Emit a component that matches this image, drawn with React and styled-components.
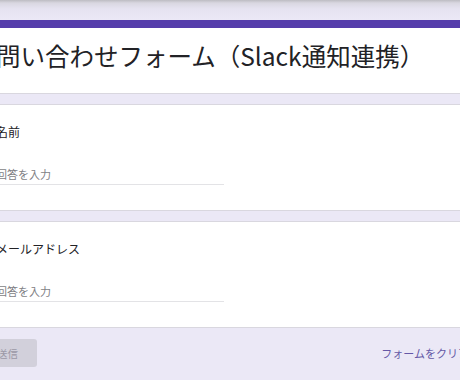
import React from "react";
import styled, { createGlobalStyle } from "styled-components";

const GlobalStyle = createGlobalStyle`
  html, body {
    margin: 0;
    padding: 0;
    height: 100%;
    overflow: hidden;
  }
  body {
    background: linear-gradient(to bottom, #bdbcc2 0px, #d9d7e1 3px, #e6e3f1 9px, #ebe8f6 20px) no-repeat, #ebe8f6;
    font-family: "Noto Sans CJK JP", "Noto Sans", sans-serif;
  }
`;

const Page = styled.div`
  padding-top: 20px;
  margin-left: -22px;
  width: 497px;
  display: flex;
  flex-direction: column;
  gap: 10px;
`;

const Card = styled.div`
  background: #ffffff;
  border-top: ${(p) => (p.$accent ? "8px solid #553dab" : "1px solid #d9d7df")};
  border-bottom: 1px solid #d9d7df;
  padding: ${(p) => (p.$accent ? "13px 18px 22px" : "19px 18px 25px")};
  display: flex;
  flex-direction: column;
`;

const Title = styled.h1`
  margin: 0;
  font-size: 24.5px;
  line-height: 30px;
  font-weight: 400;
  color: #222226;
  white-space: nowrap;
`;

const Label = styled.div`
  font-size: 12px;
  line-height: 16px;
  color: #222226;
`;

const Input = styled.div`
  margin-top: 27px;
  width: 228px;
  font-size: 11px;
  line-height: 14px;
  padding-bottom: 3px;
  color: #7f7f85;
  border-bottom: 1px solid #e3e3e6;
`;

const Footer = styled.div`
  margin-top: 1px;
  display: flex;
  align-items: center;
  justify-content: space-between;
`;

const Submit = styled.button`
  height: 28px;
  padding: 0 19px;
  border: none;
  border-radius: 3px;
  background: #d2d0db;
  color: #9b98a6;
  font-family: inherit;
  font-size: 10.5px;
`;

const Clear = styled.button`
  border: none;
  background: transparent;
  padding: 0 6px;
  color: #6558a6;
  font-family: inherit;
  font-size: 11px;
  white-space: nowrap;
`;

function Question({ label }) {
  return (
    <Card>
      <Label>{label}</Label>
      <Input>回答を入力</Input>
    </Card>
  );
}

export default function App() {
  return (
    <>
      <GlobalStyle />
      <Page>
        <Card $accent>
          <Title>問い合わせフォーム（Slack通知連携）</Title>
        </Card>
        <Question label="名前" />
        <Question label="メールアドレス" />
        <Footer>
          <Submit>送信</Submit>
          <Clear>フォームをクリア</Clear>
        </Footer>
      </Page>
    </>
  );
}
